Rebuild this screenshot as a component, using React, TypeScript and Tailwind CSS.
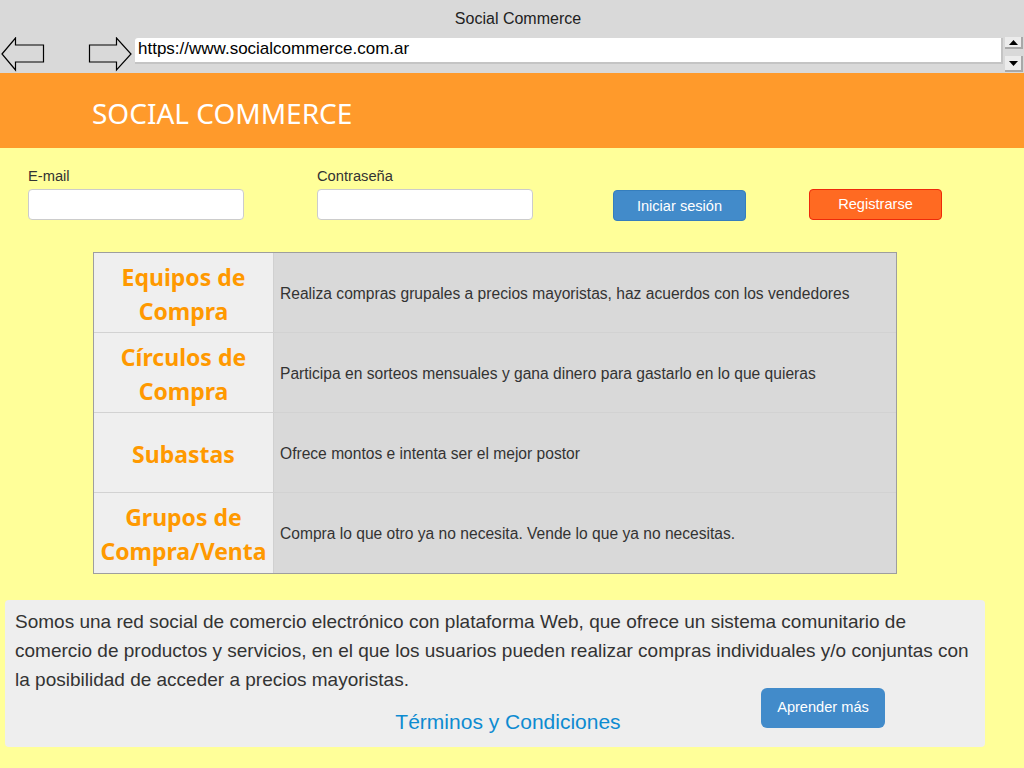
import React from "react";

const rows = [
  { title: ["Equipos de", "Compra"], text: "Realiza compras grupales a precios mayoristas, haz acuerdos con los vendedores", h: "h-[79px]" },
  { title: ["Círculos de", "Compra"], text: "Participa en sorteos mensuales y gana dinero para gastarlo en lo que quieras", h: "h-[80px]" },
  { title: ["Subastas"], text: "Ofrece montos e intenta ser el mejor postor", h: "h-[80px]" },
  { title: ["Grupos de", "Compra/Venta"], text: "Compra lo que otro ya no necesita. Vende lo que ya no necesitas.", h: "h-[81px]" },
];

export default function App() {
  return (
    <div className="w-[1024px] h-[768px] overflow-hidden bg-[#ffff99] font-['Liberation_Sans',Arial,sans-serif]">
      {/* Browser chrome */}
      <div className="h-[73px] bg-[#d9d9d9]">
        <div className="pt-[9px] pl-[12px] text-center text-[16px] leading-[20px] text-[#222]">Social Commerce</div>
        <div className="mt-[8px] flex items-start">
          <svg width="46" height="35" viewBox="0 0 46 35" className="shrink-0">
            <polygon points="2,17 15.5,1 15.5,8 43.5,8 43.5,25 15.5,25 15.5,33" fill="none" stroke="#000" strokeWidth="1.2" />
          </svg>
          <svg width="46" height="35" viewBox="0 0 46 35" className="ml-[42px] shrink-0">
            <polygon points="1.5,8 28.5,8 28.5,1 43,17 28.5,33 28.5,25 1.5,25" fill="none" stroke="#000" strokeWidth="1.2" />
          </svg>
          <div className="ml-[1px] mt-[1px] h-[26px] w-[868px] rounded-tl-[3px] border-b-2 border-r-2 border-[#c4c4c4] bg-white pl-[3px] text-[17px] leading-[22px] text-black">
            https://www.socialcommerce.com.ar
          </div>
          <div className="ml-[2px] flex w-[18px] flex-col">
            <div className="flex h-[12px] items-center justify-center border-b-2 border-r-2 border-[#a8a8a8] bg-[#ececec]">
              <svg width="9" height="5" viewBox="0 0 9 5"><polygon points="0,5 9,5 4.5,0" fill="#000" /></svg>
            </div>
            <div className="mt-[7px] flex h-[16px] items-center justify-center border-b-2 border-r-2 border-[#a8a8a8] bg-[#ececec]">
              <svg width="9" height="5" viewBox="0 0 9 5"><polygon points="0,0 9,0 4.5,5" fill="#000" /></svg>
            </div>
          </div>
        </div>
      </div>

      {/* Header */}
      <div className="flex h-[75px] items-center bg-[#ff9a2b] pl-[92px] pt-[4px]">
        <span className="font-['Comic_Sans_MS','Noto_Sans',sans-serif] text-[28px] leading-[34px] text-white">SOCIAL COMMERCE</span>
      </div>

      {/* Login form */}
      <div className="flex h-[104px] items-start pl-[28px] pt-[20px]">
        <div className="w-[216px]">
          <div className="mb-[5px] text-[14.7px] leading-[16px] text-[#333]">E-mail</div>
          <div className="h-[31px] rounded-[4px] border border-[#cccccc] bg-white" />
        </div>
        <div className="ml-[73px] w-[216px]">
          <div className="mb-[5px] text-[14.7px] leading-[16px] text-[#333]">Contraseña</div>
          <div className="h-[31px] rounded-[4px] border border-[#cccccc] bg-white" />
        </div>
        <button className="ml-[80px] mt-[22px] h-[31px] w-[133px] rounded-[4px] border border-[#357ebd] bg-[#428bca] pt-[2px] text-[14.6px] text-white">
          Iniciar sesión
        </button>
        <button className="ml-[63px] mt-[21px] h-[31px] w-[133px] rounded-[4px] border border-[#ee2a0a] bg-[#ff6a22] pt-[1px] text-[14.6px] text-white">
          Registrarse
        </button>
      </div>

      {/* Features table */}
      <div className="ml-[93px] w-[804px] border border-[#9e9e9e]">
        {rows.map((r, i) => (
          <div key={i} className={`flex ${r.h} ${i > 0 ? "border-t border-[#d2d2d2]" : ""}`}>
            <div className="flex w-[180px] shrink-0 flex-col items-center justify-center border-r border-[#d0d0d0] bg-[#efefef] pt-[2px] font-['Comic_Sans_MS','Noto_Sans',sans-serif] text-[23px] font-bold leading-[34px] text-[#ff9900]">
              {r.title.map((t) => (
                <div key={t}>{t}</div>
              ))}
            </div>
            <div className="flex flex-1 items-center bg-[#d9d9d9] pl-[6px] pt-[2px] text-[15.6px] text-[#333]">{r.text}</div>
          </div>
        ))}
      </div>

      {/* About panel */}
      <div className="ml-[5px] mt-[26px] h-[147px] w-[980px] rounded-[4px] bg-[#eeeeee] px-[10px] pt-[7px]">
        <p className="text-[19px] leading-[29px] text-[#333]">
          Somos una red social de comercio electrónico con plataforma Web, que ofrece un sistema comunitario de comercio de productos y servicios, en el que los usuarios pueden realizar compras individuales y/o conjuntas con la posibilidad de acceder a precios mayoristas.
        </p>
        <div className="-mt-[6px] flex items-start">
          <div className="mt-[21px] w-[746px] pl-[240px] text-center text-[21px] leading-[26px] text-[#0d8bd1]">
            Términos y Condiciones
          </div>
          <button className="h-[40px] w-[124px] rounded-[6px] bg-[#428bca] text-[14.6px] text-white">Aprender más</button>
        </div>
      </div>
    </div>
  );
}
